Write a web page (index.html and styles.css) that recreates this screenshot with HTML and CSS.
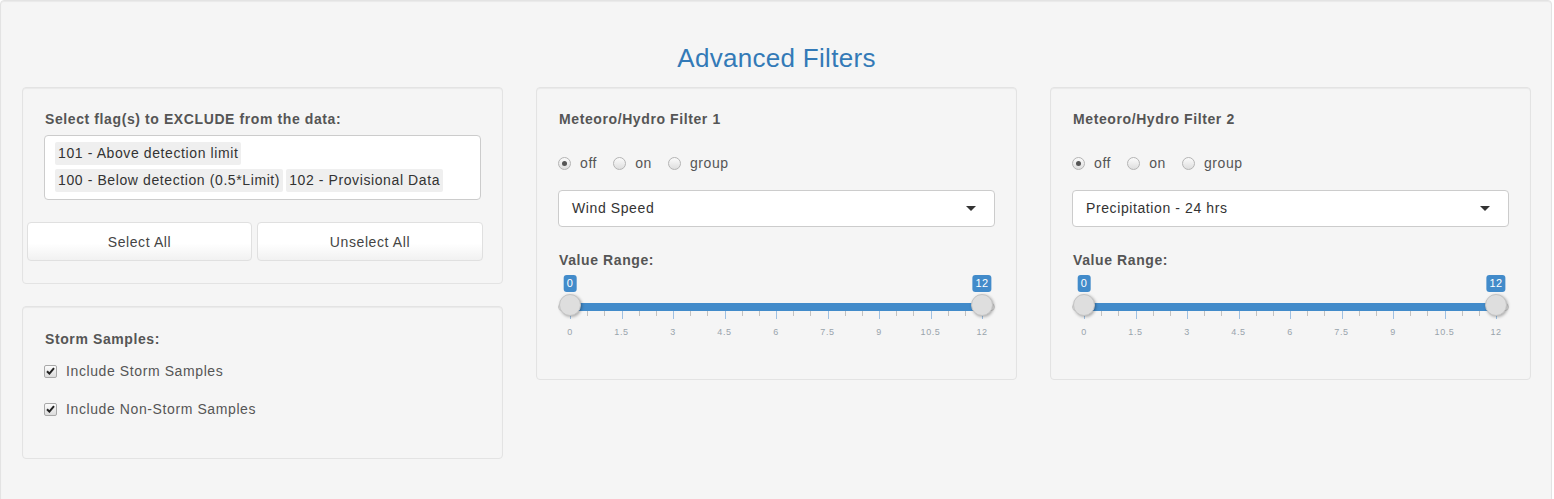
FILE: index.html
```html
<!DOCTYPE html>
<html>
<head>
<meta charset="utf-8">
<title>Advanced Filters</title>
<link rel="stylesheet" href="styles.css">
</head>
<body>
<div class="outer-well">
  <h3 class="title">Advanced Filters</h3>
  <div class="cols">
    <div class="col">
      <div class="panel flags-panel">
        <label class="ctl-label">Select flag(s) to EXCLUDE from the data:</label>
        <div class="multi">
          <span class="tag">101 - Above detection limit</span>
          <span class="tag">100 - Below detection (0.5*Limit)</span>
          <span class="tag">102 - Provisional Data</span>
        </div>
        <div class="btn-row">
          <button class="btn">Select All</button>
          <button class="btn">Unselect All</button>
        </div>
      </div>
      <div class="panel storm-panel">
        <label class="ctl-label">Storm Samples:</label>
        <div class="check-row first"><span class="cbox"><svg width="9" height="8" viewBox="0 0 9 8"><path d="M1 4.2 L3.4 6.6 L8 1.2" fill="none" stroke="#222" stroke-width="2"/></svg></span><span>Include Storm Samples</span></div>
        <div class="check-row"><span class="cbox"><svg width="9" height="8" viewBox="0 0 9 8"><path d="M1 4.2 L3.4 6.6 L8 1.2" fill="none" stroke="#222" stroke-width="2"/></svg></span><span>Include Non-Storm Samples</span></div>
      </div>
    </div>

    <div class="col">
      <div class="panel filter-panel">
        <label class="ctl-label">Meteoro/Hydro Filter 1</label>
        <div class="radio-row">
          <span class="radio-item"><span class="rdo checked"></span>off</span>
          <span class="radio-item"><span class="rdo"></span>on</span>
          <span class="radio-item"><span class="rdo"></span>group</span>
        </div>
        <div class="single-select"><span>Wind Speed</span><span class="caret"></span></div>
        <label class="ctl-label range-label">Value Range:</label>
        <div class="irs">
          <div class="irs-line"></div>
          <div class="irs-bar"></div>
          <span class="irs-handle h-from"></span>
          <span class="irs-handle h-to"></span>
          <span class="irs-tag t-from">0</span>
          <span class="irs-tag t-to">12</span>
          <div class="irs-grid">
            <span class="pol major" style="left:0%"></span>
            <span class="pol" style="left:4.1667%"></span>
            <span class="pol" style="left:8.3333%"></span>
            <span class="pol major" style="left:12.5%"></span>
            <span class="pol" style="left:16.6667%"></span>
            <span class="pol" style="left:20.8333%"></span>
            <span class="pol major" style="left:25%"></span>
            <span class="pol" style="left:29.1667%"></span>
            <span class="pol" style="left:33.3333%"></span>
            <span class="pol major" style="left:37.5%"></span>
            <span class="pol" style="left:41.6667%"></span>
            <span class="pol" style="left:45.8333%"></span>
            <span class="pol major" style="left:50%"></span>
            <span class="pol" style="left:54.1667%"></span>
            <span class="pol" style="left:58.3333%"></span>
            <span class="pol major" style="left:62.5%"></span>
            <span class="pol" style="left:66.6667%"></span>
            <span class="pol" style="left:70.8333%"></span>
            <span class="pol major" style="left:75%"></span>
            <span class="pol" style="left:79.1667%"></span>
            <span class="pol" style="left:83.3333%"></span>
            <span class="pol major" style="left:87.5%"></span>
            <span class="pol" style="left:91.6667%"></span>
            <span class="pol" style="left:95.8333%"></span>
            <span class="pol major" style="left:100%"></span>
            <span class="gtext" style="left:0%">0</span>
            <span class="gtext" style="left:12.5%">1.5</span>
            <span class="gtext" style="left:25%">3</span>
            <span class="gtext" style="left:37.5%">4.5</span>
            <span class="gtext" style="left:50%">6</span>
            <span class="gtext" style="left:62.5%">7.5</span>
            <span class="gtext" style="left:75%">9</span>
            <span class="gtext" style="left:87.5%">10.5</span>
            <span class="gtext" style="left:100%">12</span>
          </div>
        </div>
      </div>
    </div>

    <div class="col">
      <div class="panel filter-panel">
        <label class="ctl-label">Meteoro/Hydro Filter 2</label>
        <div class="radio-row">
          <span class="radio-item"><span class="rdo checked"></span>off</span>
          <span class="radio-item"><span class="rdo"></span>on</span>
          <span class="radio-item"><span class="rdo"></span>group</span>
        </div>
        <div class="single-select"><span>Precipitation - 24 hrs</span><span class="caret"></span></div>
        <label class="ctl-label range-label">Value Range:</label>
        <div class="irs">
          <div class="irs-line"></div>
          <div class="irs-bar"></div>
          <span class="irs-handle h-from"></span>
          <span class="irs-handle h-to"></span>
          <span class="irs-tag t-from">0</span>
          <span class="irs-tag t-to">12</span>
          <div class="irs-grid">
            <span class="pol major" style="left:0%"></span>
            <span class="pol" style="left:4.1667%"></span>
            <span class="pol" style="left:8.3333%"></span>
            <span class="pol major" style="left:12.5%"></span>
            <span class="pol" style="left:16.6667%"></span>
            <span class="pol" style="left:20.8333%"></span>
            <span class="pol major" style="left:25%"></span>
            <span class="pol" style="left:29.1667%"></span>
            <span class="pol" style="left:33.3333%"></span>
            <span class="pol major" style="left:37.5%"></span>
            <span class="pol" style="left:41.6667%"></span>
            <span class="pol" style="left:45.8333%"></span>
            <span class="pol major" style="left:50%"></span>
            <span class="pol" style="left:54.1667%"></span>
            <span class="pol" style="left:58.3333%"></span>
            <span class="pol major" style="left:62.5%"></span>
            <span class="pol" style="left:66.6667%"></span>
            <span class="pol" style="left:70.8333%"></span>
            <span class="pol major" style="left:75%"></span>
            <span class="pol" style="left:79.1667%"></span>
            <span class="pol" style="left:83.3333%"></span>
            <span class="pol major" style="left:87.5%"></span>
            <span class="pol" style="left:91.6667%"></span>
            <span class="pol" style="left:95.8333%"></span>
            <span class="pol major" style="left:100%"></span>
            <span class="gtext" style="left:0%">0</span>
            <span class="gtext" style="left:12.5%">1.5</span>
            <span class="gtext" style="left:25%">3</span>
            <span class="gtext" style="left:37.5%">4.5</span>
            <span class="gtext" style="left:50%">6</span>
            <span class="gtext" style="left:62.5%">7.5</span>
            <span class="gtext" style="left:75%">9</span>
            <span class="gtext" style="left:87.5%">10.5</span>
            <span class="gtext" style="left:100%">12</span>
          </div>
        </div>
      </div>
    </div>
  </div>
</div>
</body>
</html>
```

FILE: styles.css
```css
html, body {
  margin: 0;
  padding: 0;
  background: #ffffff;
  overflow: hidden;
}

body {
  font-family: "Liberation Sans", Arial, Helvetica, sans-serif;
  font-size: 14px;
  line-height: 20px;
  letter-spacing: 0.6px;
  color: #333;
}

.outer-well {
  box-sizing: border-box;
  width: 1552px;
  height: 520px;
  background: #f5f5f5;
  border: 1px solid #e3e3e3;
  border-radius: 4px;
  box-shadow: inset 0 1px 1px rgba(0, 0, 0, 0.05);
  padding: 42px 20px 0 21px;
}

.title {
  margin: 0;
  font-size: 26px;
  line-height: 30px;
  font-weight: normal;
  letter-spacing: 0.3px;
  text-align: center;
  color: #337ab7;
}

.cols {
  margin-top: 14px;
  display: grid;
  grid-template-columns: 481px 481px 481px;
  column-gap: 33px;
  align-items: start;
}

.col {
  display: flex;
  flex-direction: column;
  gap: 22px;
}

.panel {
  box-sizing: border-box;
  background: #f5f5f5;
  border: 1px solid #e3e3e3;
  border-radius: 4px;
  box-shadow: inset 0 1px 1px rgba(0, 0, 0, 0.05);
  padding: 21px 21px 22px 21px;
  display: flex;
  flex-direction: column;
}

.ctl-label {
  display: block;
  font-weight: bold;
  color: #555;
  line-height: 20px;
  padding-left: 1px;
}

/* flags */
.flags-panel .ctl-label {
  margin-bottom: 6px;
}

.multi {
  box-sizing: border-box;
  background: #fff;
  border: 1px solid #cccccc;
  border-radius: 4px;
  padding: 6px 10px 7px 10px;
  display: flex;
  flex-wrap: wrap;
  column-gap: 3px;
  row-gap: 4px;
  height: 65px;
}

.tag {
  background: #efefef;
  color: #333;
  padding: 1px 3px;
  line-height: 21px;
  border-radius: 2px;
}

.tag:first-child {
  margin-right: 200px;
}

.btn-row {
  margin: 22px -2px 0 -17px;
  display: grid;
  grid-template-columns: 225px 226px;
  column-gap: 5px;
}

.btn {
  box-sizing: border-box;
  height: 39px;
  font-family: inherit;
  font-size: 14px;
  letter-spacing: 0.6px;
  color: #444;
  background: linear-gradient(to bottom, #ffffff 55%, #f1f1f1 100%);
  border: 1px solid #e0e0e0;
  border-radius: 4px;
  padding: 0;
}

/* storm */
.storm-panel {
  padding-top: 22px;
  padding-bottom: 39px;
}

.check-row {
  display: flex;
  align-items: center;
  gap: 9px;
  color: #555;
  line-height: 20px;
  margin-top: 18px;
}

.check-row.first {
  margin-top: 12px;
}

.cbox {
  box-sizing: border-box;
  width: 13px;
  height: 13px;
  border: 1px solid #a8a8a8;
  border-radius: 2px;
  background: linear-gradient(to bottom, #fcfcfc, #dcdcdc);
  display: flex;
  align-items: center;
  justify-content: center;
}

/* filter panels */
.filter-panel {
  padding-bottom: 44px;
}

.radio-row {
  margin-top: 24px;
  display: flex;
  align-items: center;
  gap: 16px;
  color: #555;
  line-height: 20px;
}

.radio-item {
  display: flex;
  align-items: center;
  gap: 9px;
}

.rdo {
  box-sizing: border-box;
  width: 13px;
  height: 13px;
  border-radius: 50%;
  border: 1px solid #b4b4b4;
  background: linear-gradient(to bottom, #fbfbfb, #dedede);
  display: flex;
  align-items: center;
  justify-content: center;
}

.rdo.checked::after {
  content: "";
  width: 5px;
  height: 5px;
  border-radius: 50%;
  background: #555;
}

.single-select {
  margin-top: 17px;
  box-sizing: border-box;
  height: 37px;
  background: #fff;
  border: 1px solid #cccccc;
  border-radius: 4px;
  padding: 0 18px 0 13px;
  display: flex;
  align-items: center;
  justify-content: space-between;
  color: #333;
  line-height: 35px;
}

.caret {
  width: 0;
  height: 0;
  border-left: 5px solid transparent;
  border-right: 5px solid transparent;
  border-top: 5px solid #333;
}

.range-label {
  margin-top: 23px;
}

/* ion range slider (shiny skin) */
.irs {
  position: relative;
  margin-top: 5px;
  height: 60px;
}

.irs-line {
  position: absolute;
  top: 28px;
  left: 0;
  right: 0;
  height: 8px;
  box-sizing: border-box;
  border: 1px solid #ccc;
  border-radius: 16px;
  background: linear-gradient(to bottom, #ddd, #fff);
}

.irs-bar {
  position: absolute;
  top: 28px;
  left: 12px;
  right: 13px;
  height: 8px;
  background: #428bca;
}

.irs-handle {
  position: absolute;
  top: 19px;
  width: 22px;
  height: 22px;
  box-sizing: border-box;
  border: 1px solid #c4c4c4;
  border-radius: 50%;
  background: #dedede;
  box-shadow: 1px 1px 3px rgba(0, 0, 0, 0.3);
  z-index: 2;
}

.h-from {
  left: 1px;
}

.h-to {
  left: 413px;
}

.irs-tag {
  position: absolute;
  top: 0;
  transform: translateX(-50%);
  background: #428bca;
  color: #fff;
  font-size: 11px;
  line-height: 15px;
  letter-spacing: 0.5px;
  padding: 1px 3px;
  border-radius: 3px;
}

.t-from {
  left: 12px;
}

.t-to {
  left: 424px;
}

.irs-grid {
  position: absolute;
  top: 36px;
  left: 12px;
  right: 13px;
  height: 24px;
}

.pol {
  position: absolute;
  top: 0;
  width: 1px;
  height: 5px;
  background: #c2c2c2;
}

.pol.major {
  height: 8px;
  background: #9ec0e2;
}

.gtext {
  position: absolute;
  top: 16px;
  transform: translateX(-50%);
  font-size: 9px;
  line-height: 11px;
  letter-spacing: 0.6px;
  color: #99a4ac;
  white-space: nowrap;
}
```
